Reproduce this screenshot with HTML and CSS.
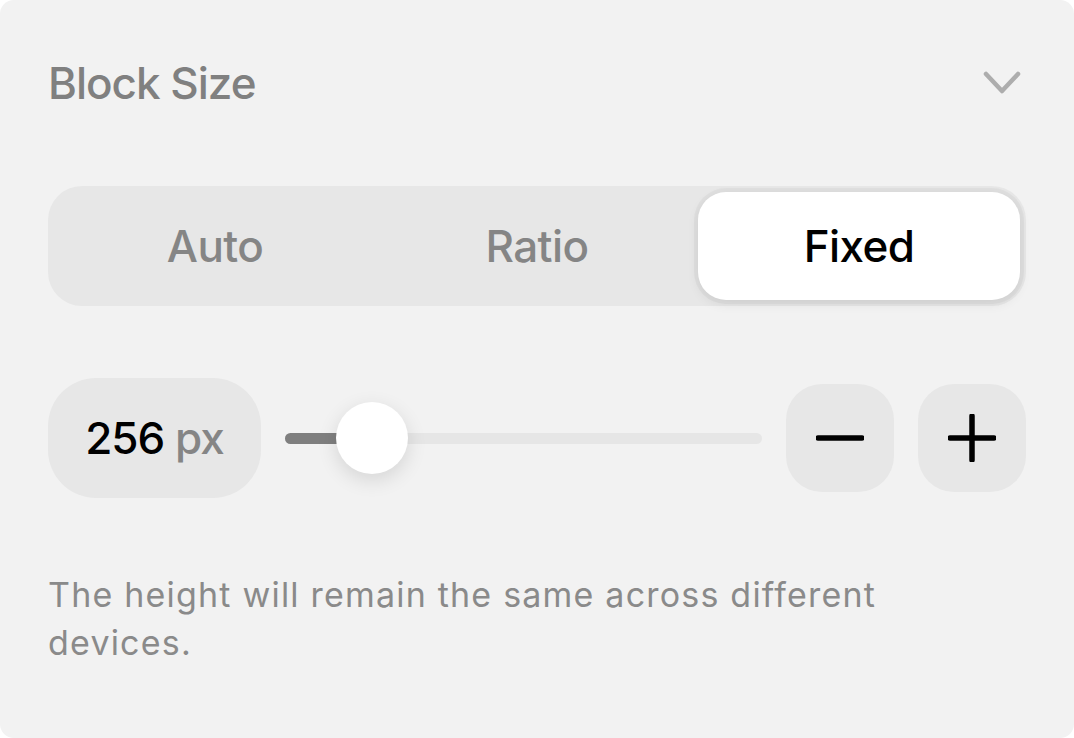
FILE: index.html
```html
<!DOCTYPE html>
<html lang="en">

<head>
    <meta charset="UTF-8">
    <meta name="viewport" content="width=device-width, initial-scale=1.0">
    <title>Block Size</title>
    <link rel="stylesheet" href="styles.css">
</head>

<body>
    <div class="panel">
        <div class="panel-header">
            <h2 class="title">Block Size</h2>
            <svg class="chevron" width="38" height="24" viewBox="0 0 38 24">
                <polyline points="3,3 19,20 35,3" fill="none" stroke="currentColor" stroke-width="4.5" stroke-linecap="round" stroke-linejoin="round" />
            </svg>
        </div>

        <div class="segmented">
            <button class="segment">Auto</button>
            <button class="segment">Ratio</button>
            <button class="segment active">Fixed</button>
        </div>

        <div class="size-row">
            <div class="value-pill">256 <span class="unit">px</span></div>
            <div class="slider">
                <div class="slider-track">
                    <div class="slider-fill" style="width: 87px"></div>
                </div>
                <div class="slider-thumb" style="left: 87px"></div>
            </div>
            <button class="step-btn" aria-label="Decrease">
                <svg width="48" height="48" viewBox="0 0 48 48">
                    <line x1="2" y1="24" x2="46" y2="24" stroke="currentColor" stroke-width="5.5" stroke-linecap="round" />
                </svg>
            </button>
            <button class="step-btn" aria-label="Increase">
                <svg width="48" height="48" viewBox="0 0 48 48">
                    <line x1="2" y1="24" x2="46" y2="24" stroke="currentColor" stroke-width="5.5" stroke-linecap="round" />
                    <line x1="24" y1="2" x2="24" y2="46" stroke="currentColor" stroke-width="5.5" stroke-linecap="round" />
                </svg>
            </button>
        </div>

        <p class="hint">The height will remain the same across different devices.</p>
    </div>
</body>

</html>
```

FILE: styles.css
```css
body {
    margin: 0;
    background-color: #ffffff;
    font-family: Inter, "Noto Sans", sans-serif;
}

.panel {
    width: 1074px;
    height: 738px;
    box-sizing: border-box;
    padding: 57px 48px 0 48px;
    background-color: #f2f2f2;
    border-radius: 14px;
}

.panel-header {
    display: flex;
    justify-content: space-between;
    align-items: center;
}

.title {
    margin: 0;
    font-size: 44px;
    line-height: 52px;
    font-weight: 500;
    letter-spacing: -1px;
    color: #808080;
}

.chevron {
    color: #adadad;
    margin-right: 5px;
}

.segmented {
    display: grid;
    grid-template-columns: 1fr 1fr 1fr;
    margin-top: 77px;
    padding: 6px;
    height: 120px;
    box-sizing: border-box;
    background-color: #e7e7e7;
    border-radius: 34px;
}

.segment {
    border: none;
    background: none;
    font-family: inherit;
    font-size: 44px;
    font-weight: 500;
    letter-spacing: -0.6px;
    color: #858585;
    border-radius: 28px;
    cursor: pointer;
}

.segment.active {
    background-color: #ffffff;
    color: #000000;
    box-shadow: 0 0 0 4px rgba(0, 0, 0, 0.03), 0 4px 12px rgba(0, 0, 0, 0.08);
}

.size-row {
    display: flex;
    align-items: center;
    gap: 24px;
    margin-top: 72px;
}

.value-pill {
    width: 213px;
    height: 120px;
    box-sizing: border-box;
    display: flex;
    align-items: center;
    justify-content: center;
    background-color: #e7e7e7;
    border-radius: 48px;
    font-size: 44px;
    font-weight: 500;
    letter-spacing: -1px;
    color: #000000;
    white-space: pre;
}

.unit {
    color: #858585;
}

.slider {
    position: relative;
    flex: 1;
    height: 72px;
    display: flex;
    align-items: center;
}

.slider-track {
    width: 100%;
    height: 11px;
    background-color: #e6e6e6;
    border-radius: 6px;
    overflow: hidden;
}

.slider-fill {
    height: 100%;
    background-color: #7f7f7f;
}

.slider-thumb {
    position: absolute;
    top: 0;
    width: 72px;
    height: 72px;
    margin-left: -36px;
    background-color: #ffffff;
    border-radius: 50%;
    box-shadow: 0 6px 20px rgba(0, 0, 0, 0.12);
}

.step-btn {
    width: 108px;
    height: 108px;
    display: flex;
    align-items: center;
    justify-content: center;
    padding: 0;
    border: none;
    background-color: #e7e7e7;
    border-radius: 36px;
    color: #000000;
    cursor: pointer;
}

.hint {
    max-width: 900px;
    margin: 73px 0 0 0;
    font-size: 34px;
    line-height: 48px;
    letter-spacing: 1.2px;
    color: #8a8a8a;
}
```
